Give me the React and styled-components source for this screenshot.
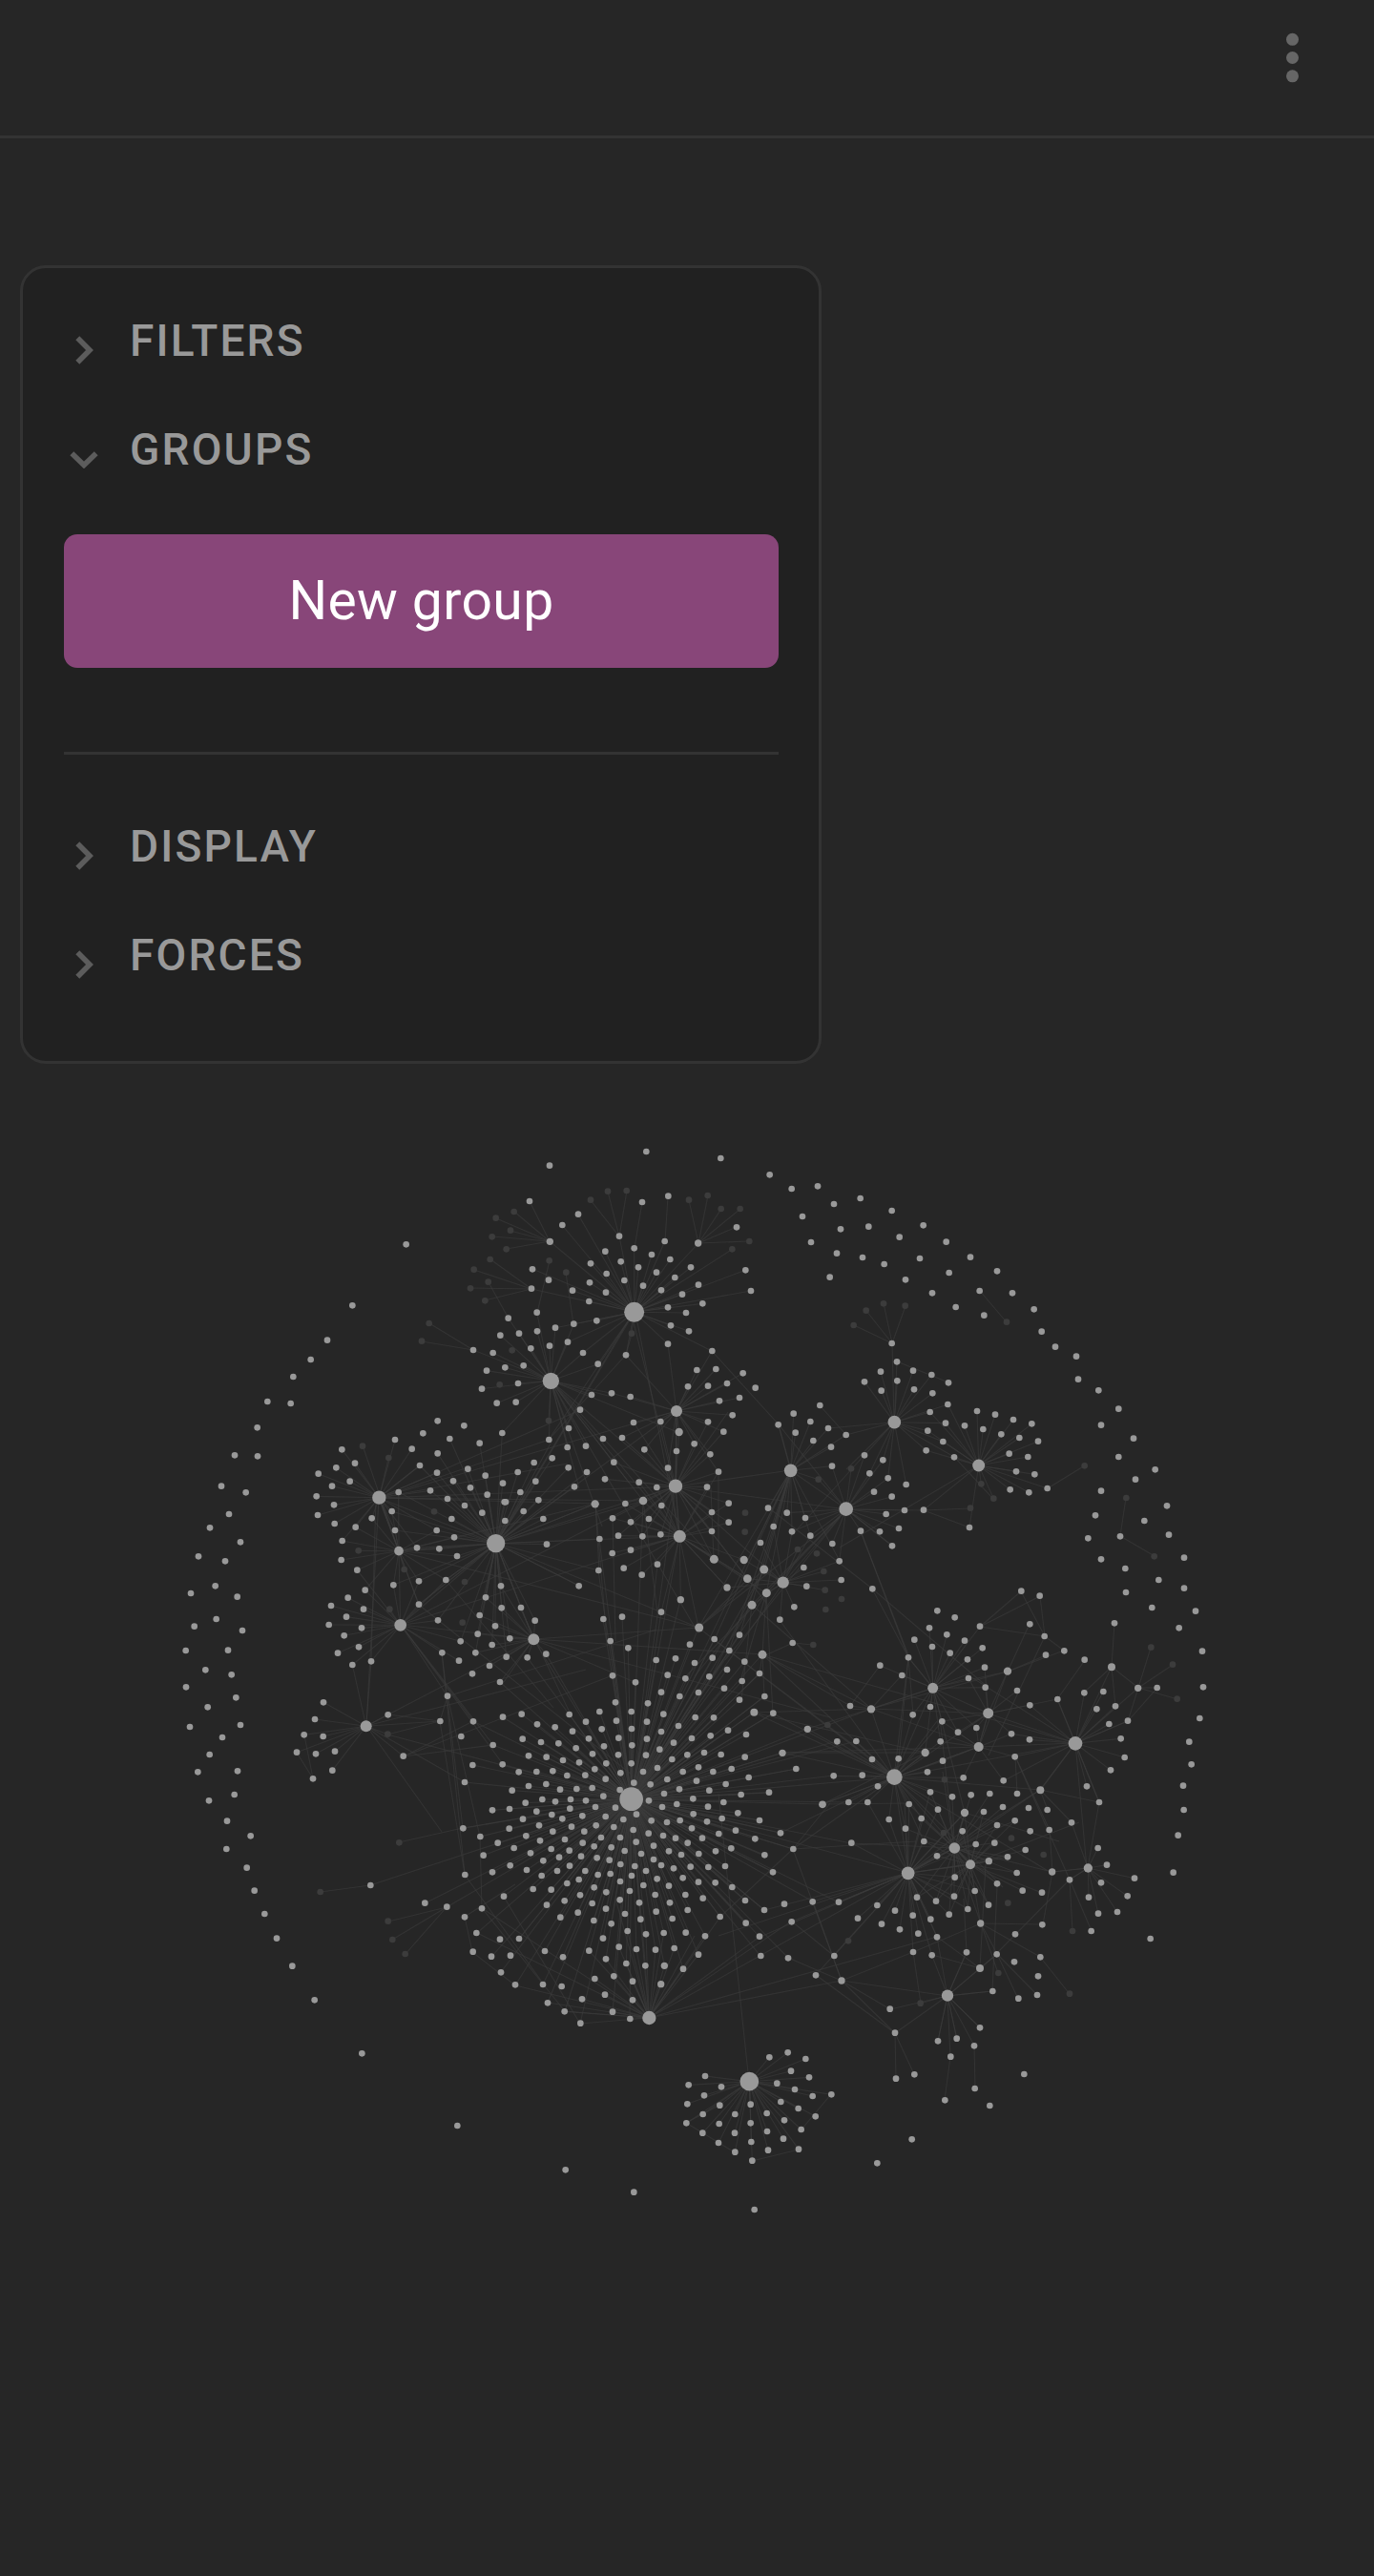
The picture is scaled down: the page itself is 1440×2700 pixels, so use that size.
import React from "react";
import styled, { createGlobalStyle } from "styled-components";

const GlobalStyle = createGlobalStyle`
  * { box-sizing: border-box; }
  body { margin: 0; background: #262626; font-family: Roboto, "Liberation Sans", sans-serif; }
`;

const Page = styled.main`
  display: flex;
  flex-direction: column;
  width: 1440px;
  height: 2700px;
  overflow: hidden;
  background: #262626;
`;

const Header = styled.header`
  flex: none;
  display: flex;
  justify-content: flex-end;
  align-items: flex-start;
  height: 145px;
  padding: 34px 79px 0 0;
  border-bottom: 3px solid #333;
`;

const MenuButton = styled.button`
  display: flex;
  padding: 0;
  border: 0;
  background: none;
  color: #666;
`;

const Panel = styled.section`
  flex: none;
  width: 840px;
  height: 837px;
  margin: 133px 0 0 21px;
  padding: 19px 42px 0 43px;
  border: 3px solid #333;
  border-radius: 27px;
  background: #212121;
`;

const SectionRow = styled.div`
  display: flex;
  align-items: center;
  height: 114.3px;
`;

const ChevronBox = styled.span`
  display: flex;
  justify-content: center;
  flex: none;
  width: 42px;
  margin-right: 27px;
  padding-top: ${(p) => (p.$open ? "21px" : "20px")};
  color: #5c5c5c;
`;

const SectionTitle = styled.h2`
  margin: 0;
  color: #999;
  font-size: 46px;
  font-weight: 500;
  line-height: 114px;
  letter-spacing: 2.2px;
`;

const NewGroupButton = styled.button`
  display: block;
  width: 100%;
  height: 140px;
  margin-top: 31px;
  padding: 0;
  border: 0;
  border-radius: 14px;
  background: #884679;
  color: #fff;
  font: 400 57px/137px Roboto, "Liberation Sans", sans-serif;
  letter-spacing: 0.4px;
`;

const Divider = styled.hr`
  height: 3px;
  margin: 88px 0 39px;
  border: 0;
  background: #333;
`;

const GraphSvg = styled.svg`
  display: block;
  flex: none;
  width: 1440px;
  height: 1585px;
`;

const pairs = (text) => text.trim().split(/\s+/).map((t) => t.split(",").map(Number));

// Each sector holds coordinates in thirds of a pixel from its origin.
const SECTORS = [
  {
    at: [180, 1190],
    notes: `737,343 568,535 489,644 437,705 382,759 301,837 374,843 269,919 198,1006 270,1009 156,1103 233,1123 180,1191
      948,675 1010,684 990,740 1048,730 975,797 1022,842 1033,629 836,898 919,913 790,937 874,954 702,957 755,986 836,1000
      968,968 1039,936 535,988 576,1031 517,1045 461,1064 560,1088 504,1103 455,1135 510,1162 459,1194 713,1122 780,1038
      834,1061 931,1049 986,1070 885,1087 939,1108 1041,1094 813,1117 867,1143 992,1130 921,1164 1046,1153 976,1187 692,1182 652,1139,21.5`,
    faint: `1019,260 1007,319 1001,390 950,422 995,461 939,481 985,520 809,591 786,647 1031,784 600,977 682,1014 825,1183`,
  },
  {
    at: [530, 1190],
    notes: `442,51 138,95 676,72 830,124 899,168 981,160 1032,216 933,255 960,336 1041,371 1019,446 75,207 178,282 228,248
      429,210 511,191 726,289 754,424 771,489 357,317 404,355 500,333 139,334,11 605,339,11 313,365 459,375 517,390 362,397
      267,403 417,415 582,415 317,435 474,431 532,447 84,421 135,455 264,463 373,456 432,473 606,470 81,482 210,488 315,494
      489,487 555,500 262,522 619,529 510,541 567,558 286,583 519,598 576,616 510,656 649,678 98,557 8,575 42,623 99,616
      156,605 214,593 79,670 138,662 195,650 243,684 56,724 39,780 32,839 290,719 378,691 270,816 333,811 392,822 234,863
      601,738 661,735 746,748 573,790 636,788 696,780 785,794 672,835 735,825 713,880 636,901 685,932 487,900 402,903
      198,921 136,957 306,954 366,951 194,981 252,977 436,988 537,993 593,970 643,1003 146,1015 89,1029 340,1028 197,1045
      38,1059 255,1059 510,1046 669,1058 94,1088 312,1081 419,1091 475,1107 216,1105 46,1122 633,1106 103,1147 0,1153
      376,1158 490,1164 701,1157 56,1182 648,1185 281,1159,12.5 432,1149,13 545,933,12.5 905,875 988,849 958,900 857,910 911,935
      1014,921 1023,980 967,960 1026,1040 1070,942 825,1172 884,1187 404,556,31.5 142,772,26 537,867,18 534,1103,21.5 896,1054,20.5`,
    faint: `26,240 15,299 2,358 267,203 321,176 380,174 576,203 635,189 677,231 737,231 766,333 712,358 137,394 190,431
      396,623 20,676 135,897 753,1187 983,1082`,
  },
  {
    at: [880, 1190],
    notes: `65,198 164,237 91,287 3,295 188,320 263,283 335,335 72,384 140,405 252,387 207,454 344,432 411,383 495,427 291,496
      440,489 543,496 365,540 454,566 611,547 635,617 678,665 744,695 750,767 814,802 877,860 822,911 924,953 877,1011
      992,1051 930,1082 822,1118 1029,1165 804,1195 164,654 180,712 129,743 78,775 231,740 289,753 181,772 342,778 131,803
      234,799 292,811 340,846 284,870 333,905 277,929 325,963 272,991 360,1012 432,867 489,878 546,894 604,907 393,913
      451,924 508,940 565,951 624,962 533,1001 592,1011 555,1057 613,1066 536,1114 595,1123 653,1110 78,1006 136,1021
      94,1063 152,1078 209,1098 108,1121 164,1136 204,1179 264,1178 146,1191 172,902,20.5 437,1038,19.5 20,1175,22`,
    faint: `44,597 83,551 138,529 206,536 525,587 36,1048 445,1096 484,1142 411,1172 770,1039 901,1140`,
  },
  {
    at: [180, 1590],
    notes: `120,34 216,79 84,124 168,139 137,217 60,240 206,251 140,321 71,344 222,357 44,420 177,419 106,481 188,496 45,535
      202,568 113,598 57,660 216,654 159,693 119,747 82,802 207,799 197,873 117,892 174,956 248,1003 172,1044 236,1103 260,1175
      512,21 578,32 629,4 702,42 536,75 533,135 583,167 771,97 833,42 888,64 880,6 1048,12 841,100 897,123 697,214 777,202
      862,198 777,275 837,325 608,230 554,254 501,279 603,290 549,314 494,339 597,349 542,373 588,409 522,428 627,454 568,465
      1035,217 987,253 1037,286 968,309 1017,343 962,368 908,391 1007,402 955,427 903,452 850,427 999,468 945,493 1032,519
      867,563 844,642 948,643 1041,629 910,690 1010,717 946,780 1040,778 921,834 680,622 728,752 477,583 450,636 416,685
      476,690 393,740 453,745 513,737 505,797 444,823 1008,922 916,979 970,1005 1025,1025 980,1064 1008,1117 922,1125 625,1158
      1044,1193 1019,83,29 714,107,14.5 719,340,19 611,658,18`,
    faint: `587,106 731,165 685,290 921,204 914,332 679,683 715,1024 467,1179`,
  },
  {
    at: [530, 1590],
    notes: `118,6 129,86 336,4 393,16 450,6 354,59 295,69 430,61 487,55 335,114 393,104 292,168 371,161 477,149 428,182 230,217
      701,17 648,45 942,3 842,30 900,46 958,59 801,81 1027,84 1049,139 937,159 946,218 1055,198 907,283 862,323 902,396
      550,260,11 489,299 307,321 366,314 48,285 92,326 13,382 2,440 68,442 127,431 329,390 385,412 336,499 408,520
      473,450 534,445 594,459 579,401 656,384 735,371 650,443 703,420 751,455 696,480 798,492 509,497 565,508 640,502 743,516
      489,551 547,564 606,552 687,539 735,575 814,564 841,617 345,583 447,586 50,620 200,621 295,612 395,612 496,620 596,630
      654,631 543,657 699,671 756,684 99,652 155,661 252,644 348,641 444,644 210,674 302,667 396,666 489,675 644,688 585,696
      53,698 111,708 166,712 261,697 355,695 444,698 528,710 221,727 309,721 397,718 484,731 72,751 128,755 273,745 354,748
      441,749 571,748 624,741 677,747 752,755 523,762 180,765 231,772 316,775 395,775 477,789 41,802 97,801 148,799 193,813
      250,812 280,793 361,805 432,801 314,824 508,825 557,801 606,787 652,801 710,792 764,819 403,836 455,841 72,846 127,840
      171,857 223,855 272,852 359,858 20,860 600,830 692,840 546,856 640,860 498,870 740,873 828,866 62,899 115,888 156,895
      204,888 252,892 307,878 450,892 538,903 589,886 685,897 12,918 97,926 202,917 282,912 345,914 492,912 636,911 730,931
      54,950 145,936 178,949 241,940 314,942 411,935 370,951 458,955 590,934 548,954 507,960 680,948 633,958 798,954 11,980
      105,970 207,974 284,970 340,975 401,984 585,979 148,989 247,989 449,995 495,1002 670,996 723,986 784,1012 864,994
      64,1003 108,1018 186,1014 300,1008 360,1008 534,1010 618,1010 242,1025 410,1022 572,1025 26,1041 278,1036 332,1039 465,1034
      78,1057 143,1044 200,1049 374,1050 513,1051 426,1059 552,1062 607,1059 660,1051 709,1042 814,1063 904,1044 168,1070 237,1067
      118,1081 287,1072 326,1079 465,1077 361,1092 406,1098 489,1095 14,1096 201,1097 528,1105 581,1100 637,1101 690,1098
      66,1110 162,1113 250,1113 441,1113 840,1117 113,1128 290,1125 329,1122 396,1128 476,1138 557,1135 193,1152 230,1140
      360,1146 606,1148 659,1150 278,1165 433,1158 513,1160 712,1164 86,1170 143,1172 316,1180 390,1176 234,1189 470,1188
      565,1188 620,1199 949,667,11 870,742,11 1042,706 913,792 1031,814 996,904,11.5 655,133,13.5 749,135,12.5
      812,165,13.5 760,194,13 696,222,11 820,239,13.5 774,277,13.5 608,348,13.5 807,433,13.5 781,614,12
      547,61,19.5 88,385,18 872,206,18.5 395,887,37`,
    faint: `752,47 918,102 978,115 1000,171 1004,230 1056,258 1006,291 967,402 1012,654`,
  },
  {
    at: [880, 1590],
    notes: `66,44 126,46 186,36 165,91 408,33 103,226 958,12 781,67 882,61 1035,56 822,133 1083,128 898,162 1003,198 900,237
      1083,224 982,285 1119,296 1067,349 1140,422 1143,535 1132,633 1099,707 1106,778 1080,845 1082,921 1064,1001 1049,1118
      864,334 571,233 629,248 598,337 644,375 706,421 648,434 441,344 307,295 362,316 282,349 337,370 235,386 393,389 291,408
      347,428 449,412 216,442 402,448 127,467 196,498 456,473 405,507 458,536 558,546 598,592 770,449 685,573 769,553 829,549
      808,604 867,595 998,537 906,641 847,651 884,697 896,756 852,796 777,847 816,897 33,594 285,597 230,622 322,643 372,677
      430,663 540,682 597,700 52,705 317,706 551,754 102,762 185,760 324,767 276,802 71,812 389,820 515,829 120,847 285,865
      354,880 413,874 472,870 558,870 28,897 88,897 218,903 309,920 453,927 513,912 594,915 653,921 155,951 257,948 207,980
      551,955 495,969 729,961 386,988 599,988 659,984 37,1025 265,1020 428,1029 487,1025 584,1047 306,1066 528,1069 469,1082,11
      362,1133 557,1119 812,1041 840,1094 927,1136 822,1150 905,1192 425,1176 495,1153 575,1175 636,1181 783,1196 243,1196
      360,1193 99,604,12.5 269,741,12.5 528,485,12.5 855,472,12 938,538,11 631,859,12 393,930,12.5 723,1141,10 668,1116,11
      293,538,16.5 467,617,16.5 437,723,15 741,712,22 172,818,25 361,1041,17.5 411,1093,15 215,1120,20.5 781,1104,14`,
    faint: `989,124 979,410 1047,464 1061,572 330,826 327,993 540,1010 641,1062`,
  },
  {
    at: [180, 1990],
    notes: `292,48 330,125 379,212 449,319 598,487 898,714 796,14 865,26 975,31 921,58 958,108 1032,128 947,167 1005,182 1035,232`,
    faint: `680,71 694,129 734,174`,
  },
  {
    at: [530, 1990],
    notes: `129,20 185,7 272,15 359,4 420,13 516,13 315,32 227,44 375,48 473,41 572,36 172,59 277,69 424,65 524,63 332,79 674,57
      383,102 441,112 497,108 566,107 627,118 42,126 306,125 15,179 123,165 262,164 356,152 411,159 471,161 530,156 606,176
      180,184 315,190 379,204 439,211 499,211,11 558,221 30,271 117,270 176,276 280,252 340,244 399,260 488,269,11 132,328 240,316
      312,302 399,319 185,355 336,356 235,392 391,378 753,6 876,17 965,10 1047,11 813,36 899,73 755,77 798,119 802,180 888,187
      1033,180 975,241 188,853 403,923 782,978 627,558 575,586 678,592 571,646 624,619 673,650 568,706 620,678 671,708
      721,678 619,737 669,768 720,737 721,797 770,647 770,706 772,765 775,824 821,675 822,732 825,791 873,755 876,697 865,639
      921,788 929,726 920,660 974,685 965,621 1024,616 909,600 853,581 954,562 897,542 943,504 887,484 829,499
      451,375,21.5 766,575,29.5`,
    faint: ``,
  },
  {
    at: [880, 1990],
    notes: `6,258,11 57,62 118,21 174,38 132,80 189,97 230,53 286,65 247,110 303,8 344,50 403,33 468,20 306,121 231,168 290,178
      399,169 494,175 549,199 552,112 637,82 631,184 624,244 621,303 562,314 481,291 158,347 174,422 177,566 235,553 309,448
      368,440 349,497 441,406 423,463 425,597 331,634 472,651 580,552 227,757 118,832 813,47 873,42 791,102 977,126
      339,305,18.5 441,219,12 443,78,11`,
    faint: `27,133 529,14 499,234 254,329 723,299 732,102`,
  },
];

const place = (sector, kind) =>
  pairs(sector[kind] || "")
    .filter((p) => p.length > 1)
    .map(([x, y, r = 10]) => ({
      x: sector.at[0] + x / 3,
      y: sector.at[1] + y / 3,
      r: r / 3,
      faint: kind === "faint",
    }));

const NODES = SECTORS.flatMap((s) => [...place(s, "faint"), ...place(s, "notes")]);

// Hub position, how far its spokes reach, and an optional lower limit for them.
const HUBS = [
  [664.7, 1375.3, 88], [577.3, 1447.3, 78], [709, 1479, 82], [708, 1557.7, 80], [828.7, 1541.3, 72],
  [886.7, 1581.7, 66], [937.3, 1490.7, 70], [1025.7, 1536, 76], [397.3, 1569.7, 70], [519.7, 1617.7, 122],
  [418, 1625.7, 64], [419.7, 1703.3, 80], [383.7, 1809.3, 78], [712.3, 1610.3, 84], [559.3, 1718.3, 68],
  [820.7, 1658.7, 64], [661.7, 1885.7, 190], [977.7, 1769.3, 76], [1035.7, 1795.7, 50], [1025.7, 1831, 48],
  [1127, 1827.3, 74], [937.3, 1862.7, 80], [1000.3, 1937, 74], [1017, 1954.3, 66], [951.7, 1963.3, 90],
  [1140.3, 1958, 54], [680.3, 2115, 96, 2120], [785.3, 2181.7, 95], [993, 2091.7, 50],
];

const SPOKES = HUBS.flatMap(([x, y, reach, floor = Infinity]) =>
  NODES.filter((n) => {
    const d = Math.hypot(n.x - x, n.y - y);
    return d > 5 && d < reach && n.y < floor && (!n.faint || d < 45);
  }).map((n) => [x, y, n.x, n.y])
);

const LINKS = [
  // top fans
  [576, 1301, 539, 1270], [576, 1301, 535, 1290], [576, 1301, 516, 1296], [576, 1301, 520, 1277], [576, 1301, 531, 1309],
  [576, 1301, 555, 1259], [576, 1301, 665, 1375], [557, 1351, 514, 1320], [557, 1351, 497, 1331], [557, 1351, 493, 1350],
  [557, 1351, 508, 1363], [557, 1351, 665, 1375], [533, 1382, 512, 1344], [533, 1382, 577, 1447],
  [649, 1296, 619, 1258], [649, 1296, 637, 1249], [649, 1296, 657, 1248], [665, 1308, 673, 1260], [697, 1301, 700, 1254],
  [732, 1303, 722, 1258], [732, 1303, 742, 1253], [732, 1303, 756, 1267], [732, 1303, 776, 1267], [732, 1303, 785, 1301],
  [732, 1303, 772, 1286], [732, 1303, 665, 1375], [665, 1375, 768, 1309], [665, 1375, 782, 1331], [665, 1375, 787, 1353],
  [665, 1375, 589, 1284], [665, 1375, 606, 1273], [665, 1375, 558, 1330], [576, 1321, 563, 1376], [593, 1334, 601, 1388],
  [665, 1375, 746, 1416], [746, 1416, 816, 1493], [816, 1493, 829, 1541], [816, 1493, 887, 1582], [496, 1415, 450, 1387],
  [496, 1415, 442, 1406], [496, 1415, 577, 1447], [662, 1398, 656, 1420], [656, 1420, 575, 1509],
  [935, 1408, 895, 1389], [935, 1408, 908, 1374], [935, 1408, 926, 1366], [935, 1408, 949, 1369], [935, 1408, 937, 1491],
  [940, 1427, 994, 1449], [1027, 1353, 1055, 1386], [1098, 1560, 1137, 1536], [937, 1491, 1000, 1527], [1000, 1527, 1041, 1571],
  [937, 1491, 887, 1540], [906, 1525, 829, 1610], [1026, 1536, 946, 1583], [887, 1582, 968, 1583], [968, 1583, 1017, 1581],
  [968, 1583, 1016, 1601], [946, 1583, 880, 1622], [708, 1558, 829, 1541], [708, 1558, 887, 1582], [859, 1473, 887, 1504],
  [1180, 1570, 1174, 1610], [1174, 1610, 1210, 1631],
  // upper left web
  [665, 1375, 520, 1618], [665, 1375, 575, 1509], [658, 1385, 515, 1625], [664, 1386, 707, 1558], [668, 1386, 712, 1610],
  [577, 1447, 708, 1558], [577, 1447, 712, 1610], [577, 1447, 674, 1573], [577, 1447, 631, 1600], [577, 1447, 660, 1555],
  [577, 1447, 732, 1712], [577, 1447, 607, 1560], [577, 1447, 748, 1634], [577, 1447, 710, 1501], [577, 1447, 641, 1464],
  [397, 1570, 575, 1509], [397, 1570, 520, 1618], [397, 1570, 608, 1478], [397, 1570, 709, 1479], [397, 1570, 674, 1573],
  [397, 1570, 708, 1558], [397, 1570, 624, 1576], [397, 1570, 440, 1536], [397, 1570, 595, 1534], [397, 1570, 439, 1682],
  [397, 1570, 384, 1809], [394, 1570, 389, 1741], [397, 1570, 418, 1626], [520, 1618, 420, 1703], [520, 1618, 439, 1682],
  [520, 1618, 467, 1656], [520, 1618, 708, 1558], [520, 1618, 674, 1573], [520, 1618, 712, 1610], [520, 1618, 624, 1576],
  [520, 1618, 559, 1718], [520, 1618, 607, 1662], [520, 1618, 732, 1706], [520, 1618, 709, 1479], [520, 1618, 578, 1511],
  [418, 1626, 624, 1576], [418, 1626, 380, 1515], [418, 1626, 732, 1706], [420, 1703, 559, 1718], [420, 1703, 712, 1610],
  [420, 1703, 674, 1573], [420, 1703, 496, 1804], [420, 1703, 517, 1829], [420, 1703, 527, 1849], [420, 1703, 469, 1778],
  [384, 1809, 559, 1718], [384, 1809, 463, 1920], [384, 1809, 487, 1868], [384, 1809, 614, 1750], [407, 1797, 461, 1804],
  [423, 1841, 496, 1804], [423, 1841, 517, 1829], [423, 1841, 642, 1756], [406, 1818, 461, 1804], [406, 1818, 662, 1886],
  [467, 1656, 580, 1790], [463, 1732, 485, 1916], [463, 1732, 487, 1964], [469, 1778, 503, 1925], [469, 1778, 461, 1804],
  [461, 1804, 487, 1964], [559, 1718, 662, 1886], [559, 1718, 732, 1706], [559, 1718, 800, 1734], [559, 1718, 870, 1800],
  [559, 1718, 665, 1763], [545, 1685, 598, 1797], [528, 1763, 559, 1718], [469, 1778, 688, 1708], [439, 1682, 662, 1860],
  [328, 1864, 319, 1819], [328, 1864, 311, 1837], [418, 1931, 485, 1916], [485, 1916, 662, 1886], [336, 1983, 388, 1976],
  [388, 1976, 662, 1886], [407, 2014, 468, 1999], [411, 2033, 468, 1999], [425, 2048, 468, 1999], [468, 1999, 662, 1886],
  [445, 1995, 662, 1886], [487, 2009, 540, 1975], [500, 2026, 662, 1886], [487, 2009, 495, 2046], [495, 2046, 540, 2081],
  [540, 2081, 680, 2115], [574, 2099, 680, 2115], [592, 2108, 680, 2115], [608, 2121, 680, 2115], [505, 2000, 592, 2108],
  [505, 2000, 680, 2115], [528, 1988, 608, 2121], [487, 1965, 570, 2080], [500, 2026, 680, 2115], [503, 1925, 505, 2000],
  [525, 2067, 662, 1886], [540, 2081, 662, 1886], [574, 2099, 662, 1886], [592, 2108, 662, 1886], [608, 2121, 662, 1886],
  [642, 2109, 662, 1886], [660, 2116, 662, 1886], [569, 2080, 662, 1886], [544, 2032, 662, 1886], [515, 2051, 662, 1886],
  // centre strands
  [662, 1886, 632, 1697], [662, 1886, 652, 1695], [662, 1886, 640, 1720], [662, 1886, 627, 1646], [662, 1886, 628, 1613],
  [662, 1886, 674, 1573], [662, 1886, 708, 1558], [662, 1886, 712, 1610], [662, 1886, 689, 1640], [662, 1886, 693, 1690],
  [662, 1886, 713, 1677], [662, 1886, 732, 1706], [662, 1886, 749, 1718], [662, 1886, 775, 1714], [662, 1886, 788, 1682],
  [662, 1886, 803, 1670], [662, 1886, 801, 1645], [662, 1886, 821, 1659], [662, 1886, 829, 1541], [662, 1886, 799, 1734],
  [662, 1886, 764, 1733], [662, 1886, 796, 1754], [662, 1886, 801, 1778], [662, 1886, 790, 1795], [662, 1886, 810, 1796],
  [624, 1576, 636, 1720], [624, 1576, 628, 1646], [642, 1590, 645, 1720], [674, 1573, 689, 1690], [708, 1558, 748, 1634],
  [708, 1558, 803, 1680], [708, 1558, 784, 1655], [712, 1610, 784, 1655], [712, 1610, 803, 1670], [712, 1610, 732, 1706],
  [712, 1610, 762, 1664], [732, 1706, 784, 1655], [732, 1706, 801, 1645], [732, 1706, 829, 1541], [749, 1718, 829, 1541],
  [775, 1714, 829, 1541], [764, 1730, 829, 1541], [803, 1670, 829, 1541], [801, 1645, 829, 1541], [788, 1682, 829, 1541],
  [788, 1682, 887, 1582], [803, 1670, 887, 1582], [821, 1659, 887, 1582], [760, 1740, 887, 1582], [732, 1706, 880, 1590],
  [716, 1760, 803, 1670], [728, 1757, 788, 1682], [746, 1757, 801, 1645], [777, 1782, 788, 1682], [775, 1765, 803, 1670],
  [748, 1634, 745, 1560], [763, 1480, 708, 1558], [753, 1542, 753, 1630], [784, 1635, 829, 1541], [821, 1659, 708, 1558],
  [799, 1734, 803, 1670], [799, 1734, 796, 1754], [801, 1778, 799, 1734], [810, 1796, 803, 1670],
  [829, 1541, 880, 1636], [805, 1580, 914, 1665], [902, 1605, 954, 1740], [887, 1582, 935, 1620],
  // right web
  [799, 1734, 937, 1863], [799, 1734, 1127, 1827], [799, 1734, 913, 1791], [788, 1682, 913, 1791], [799, 1734, 891, 1788],
  [817, 1698, 935, 1860], [831, 1722, 802, 1735], [831, 1722, 852, 1724], [732, 1706, 937, 1863], [748, 1718, 914, 1844],
  [790, 1795, 913, 1791], [790, 1795, 937, 1863], [810, 1796, 937, 1863], [846, 1812, 913, 1791], [846, 1812, 937, 1863],
  [820, 1837, 937, 1863], [662, 1886, 820, 1837], [662, 1886, 846, 1812], [662, 1886, 913, 1791], [662, 1886, 877, 1825],
  [662, 1886, 897, 1825], [662, 1886, 937, 1863], [662, 1886, 862, 1891], [662, 1886, 889, 1889], [662, 1886, 835, 1854],
  [662, 1886, 806, 1879], [662, 1886, 874, 1861], [662, 1886, 818, 1921], [662, 1886, 892, 1932], [662, 1886, 797, 1908],
  [662, 1886, 952, 1963], [662, 1886, 801, 1945], [662, 1886, 831, 1938], [662, 1886, 810, 1962], [662, 1886, 852, 1993],
  [662, 1886, 879, 1994], [662, 1886, 801, 2002], [662, 1886, 781, 1992], [662, 1886, 770, 1977], [662, 1886, 796, 2030],
  [662, 1886, 797, 2050], [662, 1886, 826, 2052], [662, 1886, 755, 2009], [662, 1886, 781, 2016],
  [820, 1837, 1025, 1831], [820, 1837, 970, 1837], [790, 1795, 970, 1837], [913, 1791, 1036, 1796], [913, 1791, 978, 1769],
  [913, 1791, 1025, 1831], [913, 1791, 1056, 1752], [862, 1891, 937, 1863], [862, 1891, 970, 1837], [862, 1891, 952, 1890],
  [862, 1891, 1025, 1831], [937, 1863, 1127, 1827], [937, 1863, 1025, 1831], [937, 1863, 978, 1769],
  [937, 1863, 952, 1737], [937, 1863, 982, 1804], [937, 1863, 1090, 1876], [937, 1863, 1036, 1796], [952, 1963, 937, 1863],
  [952, 1963, 1000, 1937], [952, 1963, 1011, 1900], [952, 1963, 1090, 1876], [952, 1963, 948, 1890], [952, 1963, 801, 2002],
  [952, 1963, 852, 1993], [952, 1963, 879, 1994], [952, 1963, 830, 2014], [952, 1963, 797, 2030], [952, 1963, 680, 2115],
  [952, 1963, 874, 2050], [952, 1963, 753, 2029], [952, 1963, 855, 2070], [892, 1932, 1000, 1937], [831, 1938, 960, 1930],
  [831, 1938, 882, 2076], [831, 1938, 755, 2009], [831, 1938, 937, 1863], [831, 1938, 870, 1890], [818, 1921, 937, 1863],
  [978, 1769, 1056, 1752], [978, 1769, 1011, 1900], [978, 1769, 952, 1737], [978, 1769, 1027, 1705], [1027, 1705, 1070, 1668],
  [1027, 1705, 1090, 1673], [1027, 1705, 1095, 1715], [1070, 1668, 1095, 1715], [1090, 1673, 1095, 1715], [1095, 1715, 1115, 1730],
  [1095, 1715, 1036, 1840], [1056, 1752, 1079, 1702], [1056, 1752, 1115, 1730], [1056, 1752, 1026, 1831], [1056, 1752, 1096, 1735],
  [952, 1737, 902, 1605], [914, 1665, 952, 1737], [914, 1665, 1036, 1769], [891, 1788, 922, 1746], [891, 1788, 913, 1791],
  [913, 1791, 945, 1756], [952, 1737, 957, 1797], [952, 1737, 942, 1843], [1036, 1796, 1127, 1827], [1036, 1796, 1079, 1787],
  [1079, 1787, 1108, 1781], [1108, 1781, 1137, 1740], [1108, 1781, 1127, 1827], [1127, 1827, 1025, 1831], [1127, 1827, 1090, 1876],
  [1127, 1827, 1139, 1958], [1127, 1827, 1152, 1889], [1152, 1889, 1140, 1958], [1165, 1747, 1168, 1701], [1165, 1747, 1169, 1788],
  [1165, 1747, 1127, 1827], [1165, 1747, 1193, 1769], [1165, 1747, 1136, 1774], [1193, 1769, 1206, 1727], [1193, 1769, 1229, 1745],
  [1193, 1769, 1234, 1781], [1193, 1769, 1213, 1769], [1193, 1769, 1182, 1804], [1213, 1769, 1182, 1804], [1193, 1769, 1127, 1827],
  [1127, 1827, 1182, 1804], [1127, 1827, 1015, 1756], [1127, 1827, 1051, 1867], [1090, 1876, 1000, 1937], [1090, 1876, 1152, 1889],
  [1090, 1876, 1123, 1910], [1090, 1876, 1098, 1897], [1064, 1841, 1066, 1880], [1064, 1841, 1121, 1970], [1064, 1841, 1100, 1918],
  [1100, 1918, 1103, 1962], [1103, 1962, 1140, 1958], [1121, 1970, 1140, 1958], [1103, 1962, 1000, 1937], [1017, 1954, 1036, 1951],
  [1103, 1962, 1093, 2017], [1121, 1970, 1044, 2048], [1121, 1970, 1124, 2024], [1121, 1970, 1144, 2024], [1140, 1958, 1171, 2004],
  [1017, 1954, 1092, 1984], [1017, 1954, 1131, 1910], [1000, 1937, 1028, 2016], [1000, 1937, 985, 1800], [1000, 1937, 988, 1857],
  [1011, 1900, 1000, 1937], [1011, 1900, 1110, 1930], [937, 1863, 1017, 1954], [937, 1863, 1051, 1978], [937, 1863, 1100, 1962],
  // bottom
  [680, 2115, 882, 2076], [680, 2115, 982, 2030], [680, 2115, 796, 2030], [680, 2115, 829, 2014],
  [680, 2115, 728, 2029], [680, 2115, 755, 2009], [680, 2115, 662, 1900], [680, 2115, 645, 1990], [680, 2115, 740, 2027],
  [785, 2182, 753, 1880], [882, 2076, 993, 2092], [882, 2076, 933, 2106], [933, 2106, 993, 2092], [882, 2076, 957, 2046],
  [882, 2076, 938, 2131], [855, 2070, 938, 2131], [826, 2052, 882, 2076], [830, 2014, 874, 2050], [852, 1993, 882, 2076],
  [938, 2131, 939, 2179], [938, 2131, 958, 2174], [938, 2131, 993, 2092], [993, 2092, 996, 2156], [996, 2156, 990, 2201],
  [1021, 2144, 1022, 2189], [993, 2092, 983, 2139], [993, 2092, 1003, 2137], [993, 2092, 1021, 2144], [993, 2092, 1027, 2125],
  [993, 2092, 1040, 2087], [993, 2092, 1013, 2046], [993, 2092, 1045, 2048], [993, 2092, 982, 2030], [982, 2030, 952, 1963],
  [982, 2030, 1027, 2063], [977, 2049, 1027, 2063], [957, 2046, 1028, 2016], [957, 2046, 965, 2100],
  [1028, 2016, 1092, 2017], [1028, 2016, 1090, 2051], [1090, 2051, 1121, 2090], [1027, 2063, 1045, 2048], [1027, 2063, 1033, 1954],
  [1045, 2048, 1087, 2091], [1045, 2048, 1067, 2095], [1028, 2016, 1045, 2048], [1045, 1977, 1040, 2087], [1028, 2016, 1046, 2068],
  [1013, 2046, 1010, 1990], [719, 2225, 755, 2206], [719, 2225, 770, 2256], [788, 2265, 837, 2253],
  [840, 2232, 871, 2195],
];

function ForceGraph() {
  return (
    <GraphSvg viewBox="0 1115 1440 1585" role="img" aria-label="Graph view">
      <g stroke="#3c3c3c" strokeOpacity="0.6" strokeWidth="1.1">
        {[...SPOKES, ...LINKS].map(([x1, y1, x2, y2], i) => (
          <line key={i} x1={x1} y1={y1} x2={x2} y2={y2} />
        ))}
      </g>
      {NODES.map((n, i) => (
        <circle key={i} cx={n.x} cy={n.y} r={n.r} fill={n.faint ? "#3c3c3c" : "#999"} />
      ))}
    </GraphSvg>
  );
}

function Chevron({ open }) {
  return (
    <ChevronBox $open={open}>
      {open ? (
        <svg width="30" height="18" viewBox="0 0 30 18" fill="none" stroke="currentColor" strokeWidth="5.6">
          <path d="M2.3 2.3 15 14.5 27.7 2.3" />
        </svg>
      ) : (
        <svg width="19" height="30" viewBox="0 0 19 30" fill="none" stroke="currentColor" strokeWidth="5.6">
          <path d="M2.3 2.3 15 15 2.3 27.7" />
        </svg>
      )}
    </ChevronBox>
  );
}

function Section({ title, open = false }) {
  return (
    <SectionRow>
      <Chevron open={open} />
      <SectionTitle>{title}</SectionTitle>
    </SectionRow>
  );
}

export default function App() {
  return (
    <Page>
      <GlobalStyle />
      <Header>
        <MenuButton aria-label="More options">
          <svg width="13" height="53" viewBox="0 0 13 53" fill="currentColor">
            <circle cx="6.5" cy="7.3" r="6.5" />
            <circle cx="6.5" cy="26.5" r="6.5" />
            <circle cx="6.5" cy="45.8" r="6.5" />
          </svg>
        </MenuButton>
      </Header>
      <Panel>
        <Section title="FILTERS" />
        <Section title="GROUPS" open />
        <NewGroupButton>New group</NewGroupButton>
        <Divider />
        <Section title="DISPLAY" />
        <Section title="FORCES" />
      </Panel>
      <ForceGraph />
    </Page>
  );
}
